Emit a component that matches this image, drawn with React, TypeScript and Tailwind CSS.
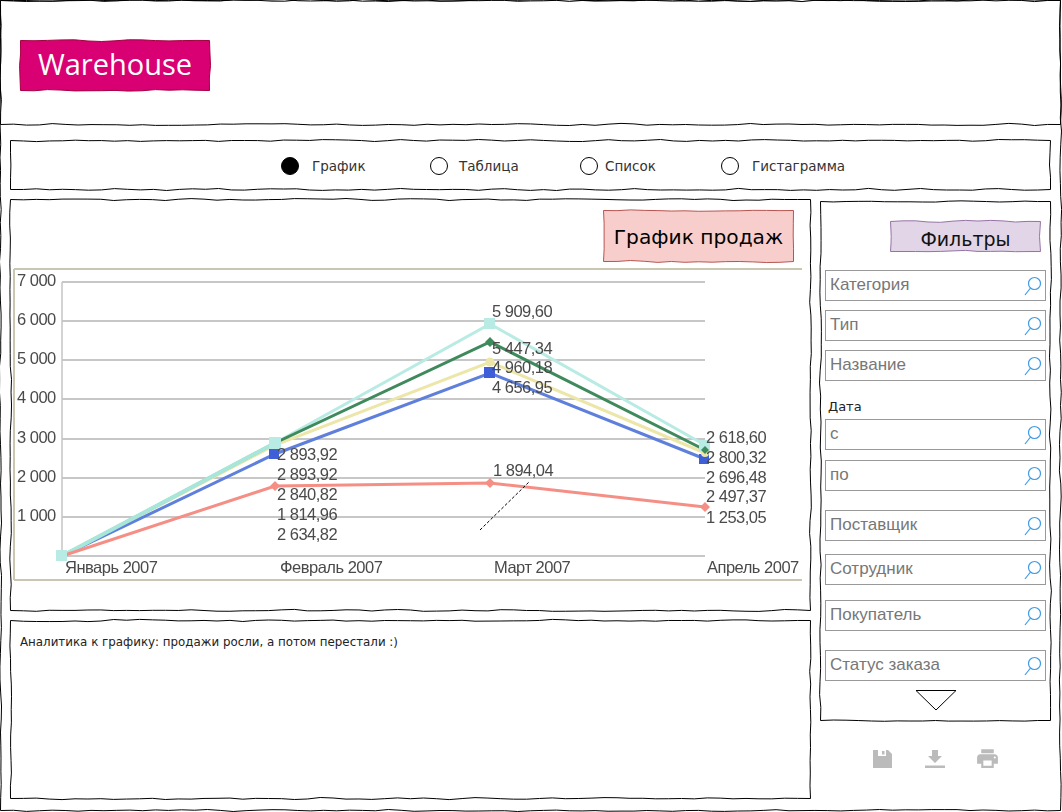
import type { ReactNode } from 'react'
import { MdPrint } from 'react-icons/md'

// wobbly hand-drawn outline, same seed always gives the same line
const wobblyRect = (w: number, h: number, seed: number, amp = 1.1, step = 26) => {
  let s = seed
  const rnd = () => {
    s = (s * 9301 + 49297) % 233280
    return s / 233280 - 0.5
  }
  const edge = (x0: number, y0: number, x1: number, y1: number) => {
    const len = Math.hypot(x1 - x0, y1 - y0)
    const n = Math.max(2, Math.round(len / step))
    const nx = (y1 - y0) / len
    const ny = (x0 - x1) / len
    let d = ''
    for (let i = 1; i <= n; i++) {
      const t = i / n
      const m = (i - 0.5) / n
      const o = i === n ? 0 : rnd() * amp * 2
      const c = rnd() * amp * 2
      d += ` Q${(x0 + (x1 - x0) * m + nx * c).toFixed(1)} ${(y0 + (y1 - y0) * m + ny * c).toFixed(1)} ${(x0 + (x1 - x0) * t + nx * o).toFixed(1)} ${(y0 + (y1 - y0) * t + ny * o).toFixed(1)}`
    }
    return d
  }
  return `M0.5 0.5${edge(0.5, 0.5, w - 0.5, 0.5)}${edge(w - 0.5, 0.5, w - 0.5, h - 0.5)}${edge(w - 0.5, h - 0.5, 0.5, h - 0.5)}${edge(0.5, h - 0.5, 0.5, 0.5)}Z`
}

type SketchProps = {
  w: number
  h: number
  seed: number
  className: string
  fillClass?: string
  strokeClass?: string
  children?: ReactNode
}

function Sketch({ w, h, seed, className, fillClass = 'fill-none', strokeClass = 'stroke-black', children }: SketchProps) {
  return (
    <div className={`relative ${className}`}>
      <svg viewBox={`0 0 ${w} ${h}`} className="absolute inset-0 w-full h-full overflow-visible pointer-events-none">
        <path d={wobblyRect(w, h, seed)} className={`${fillClass} ${strokeClass}`} strokeWidth={1} />
      </svg>
      {children}
    </div>
  )
}

const views = [
  { label: 'График', on: true, width: 'w-[149px]', gap: 'ml-[13px]' },
  { label: 'Таблица', on: false, width: 'w-[150px]', gap: 'ml-[11px]' },
  { label: 'Список', on: false, width: 'w-[141px]', gap: 'ml-[7px]' },
  { label: 'Гистаграмма', on: false, width: 'w-[140px]', gap: 'ml-[13px]' },
]

const filters = [
  { label: 'Категория', top: 'mt-[18px]' },
  { label: 'Тип', top: 'mt-[9px]' },
  { label: 'Название', top: 'mt-[9px]' },
  { label: 'с', top: 'mt-[4px]' },
  { label: 'по', top: 'mt-[10px]' },
  { label: 'Поставщик', top: 'mt-[19px]' },
  { label: 'Сотрудник', top: 'mt-[13px]' },
  { label: 'Покупатель', top: 'mt-[15px]' },
  { label: 'Статус заказа', top: 'mt-[19px]' },
]

function SearchIcon() {
  return (
    <svg width="18" height="20" viewBox="0 0 18 20" className="fill-none stroke-[#3f9be6]" strokeWidth={1.2}>
      <circle cx="10.5" cy="7.5" r="6" />
      <path d="M6.5 12 L1 19" />
    </svg>
  )
}

function FilterField({ label, top }: { label: string; top: string }) {
  return (
    <div className={`${top} ml-[5px] w-[221px] h-[31px] border border-[#999] flex items-center justify-between pl-1 pr-[3px]`}>
      <span className="mb-[2px] text-[17px] text-[#777] font-['Liberation_Sans',sans-serif]">{label}</span>
      <SearchIcon />
    </div>
  )
}

const gridYs = [282, 321, 360, 399, 439, 478, 517, 556]
const axisLabels = ['7 000', '6 000', '5 000', '4 000', '3 000', '2 000', '1 000']

const series = [
  { color: '#b8ebe3', width: 3, pts: '62,556 275,443 490,324 705,445' },
  { color: '#ece6a8', width: 3, pts: '62,556 275,445 490,362 705,453' },
  { color: '#3f8a5c', width: 3, pts: '62,556 275,443 490,342 705,450' },
  { color: '#5f7fdc', width: 3, pts: '62,556 275,454 490,373 705,459' },
  { color: '#a9e6da', width: 4, pts: '62,556 275,443' },
  { color: '#f58f85', width: 3, pts: '62,556 275,486 490,483 705,507' },
]

const valueLabels = [
  { x: 492, y: 317, t: '5 909,60' },
  { x: 492, y: 354, t: '5 447,34' },
  { x: 492, y: 373, t: '4 960,18' },
  { x: 492, y: 393, t: '4 656,95' },
  { x: 493, y: 476, t: '1 894,04' },
  { x: 277, y: 460, t: '2 893,92' },
  { x: 277, y: 480, t: '2 893,92' },
  { x: 277, y: 500, t: '2 840,82' },
  { x: 277, y: 520, t: '1 814,96' },
  { x: 277, y: 540, t: '2 634,82' },
  { x: 706, y: 443, t: '2 618,60' },
  { x: 706, y: 463, t: '2 800,32' },
  { x: 706, y: 483, t: '2 696,48' },
  { x: 706, y: 502, t: '2 497,37' },
  { x: 706, y: 523, t: '1 253,05' },
]

const monthLabels = [
  { x: 65, t: 'Январь 2007' },
  { x: 280, t: 'Февраль 2007' },
  { x: 494, t: 'Март 2007' },
  { x: 707, t: 'Апрель 2007' },
]

function SalesChart() {
  return (
    <svg viewBox="13 268 790 314" className="block w-[790px] h-[314px] mt-[6px] ml-[3px] blur-[0.5px] font-['Liberation_Sans',sans-serif]">
      <rect x="13" y="268" width="790" height="314" fill="#ffffff" />
      <path d="M14 269 H802 M14 269 V580 M14 580 H802" fill="none" stroke="#c9c6b2" strokeWidth={2} />
      {gridYs.map((y) => (
        <line key={y} x1="62" x2="705" y1={y} y2={y} stroke="#b4b4b4" strokeWidth={1.5} />
      ))}
      <line x1="62" x2="62" y1="282" y2="556" stroke="#c4c4c4" strokeWidth={1.5} />
      {series.map((s) => (
        <polyline key={s.pts} points={s.pts} fill="none" stroke={s.color} strokeWidth={s.width} />
      ))}

      {/* markers */}
      <rect x="56" y="550" width="11" height="11" fill="#b8ebe3" />
      <rect x="269" y="437" width="12" height="12" fill="#b8ebe3" />
      <rect x="484" y="318" width="11" height="11" fill="#b8ebe3" />
      <rect x="699" y="440" width="11" height="11" fill="#b8ebe3" />
      <rect x="269" y="449" width="10" height="10" fill="#3f5fd8" />
      <rect x="484" y="367" width="11" height="11" fill="#3f5fd8" />
      <rect x="699" y="454" width="10" height="10" fill="#3f5fd8" />
      <circle cx="490" cy="362" r="4.5" fill="#ece6a8" />
      <circle cx="705" cy="453" r="4" fill="#ece6a8" />
      <path d="M490 337 L495 342 L490 347 L485 342Z M705 446 L709 450 L705 454 L701 450Z" fill="#3f8a5c" />
      <path d="M275 481 L280 486 L275 491 L270 486Z M490 478 L495 483 L490 488 L485 483Z M705 502 L710 507 L705 512 L700 507Z" fill="#f58f85" />

      <g fill="#4a4a4a" fontSize="16.5" letterSpacing="-0.5">
        {axisLabels.map((t, i) => (
          <text key={t} x="17" y={gridYs[i] + 4}>{t}</text>
        ))}
        {valueLabels.map((l, i) => (
          <text key={i} x={l.x} y={l.y}>{l.t}</text>
        ))}
        {monthLabels.map((m) => (
          <text key={m.t} x={m.x} y="573">{m.t}</text>
        ))}
      </g>
      <line x1="480" y1="530" x2="530" y2="481" stroke="#000" strokeWidth={1} strokeDasharray="3 2" />
    </svg>
  )
}

export default function App() {
  return (
    <div className="w-[1062px] h-[812px] bg-white overflow-hidden font-['DejaVu_Sans',sans-serif]">
      <Sketch w={1061} h={811} seed={7} className="w-[1061px] h-[811px]">
        {/* Header */}
        <Sketch w={1061} h={125} seed={21} className="w-[1061px] h-[125px] flex items-center pl-5">
          <Sketch
            w={190}
            h={51}
            seed={33}
            fillClass="fill-[#d80073]"
            strokeClass="stroke-[#a50040]"
            className="w-[190px] h-[51px] mt-[5px] pb-[2px] flex items-center justify-center"
          >
            <span className="relative text-[29px] text-white font-['Open_Sans',sans-serif]">Warehouse</span>
          </Sketch>
        </Sketch>

        <div className="pl-[10px] pt-[15px]">
          {/* View switcher */}
          <Sketch w={1041} h={50} seed={45} className="w-[1041px] h-[50px] flex items-center pl-[271px] pt-[2px]">
            {views.map((v) => (
              <div key={v.label} className={`${v.width} flex items-center`}>
                <span className={`w-[18px] h-[18px] shrink-0 rounded-full border border-black ${v.on ? 'bg-black' : 'bg-white'}`} />
                <span className={`${v.gap} text-[13.5px] text-[#333]`}>{v.label}</span>
              </div>
            ))}
          </Sketch>

          <div className="flex gap-[9px] mt-[9px]">
            <div className="w-[801px] flex flex-col gap-[9px]">
              {/* Chart */}
              <Sketch w={801} h={412} seed={58} className="w-[801px] h-[412px]">
                <div className="relative flex justify-end pt-[11px] pr-[17px]">
                  <Sketch
                    w={191}
                    h={52}
                    seed={64}
                    fillClass="fill-[#f8cecc]"
                    strokeClass="stroke-[#b85450]"
                    className="w-[191px] h-[52px] pt-[2px] flex items-center justify-center"
                  >
                    <span className="relative text-[20.2px] text-black">График продаж</span>
                  </Sketch>
                </div>
                <SalesChart />
              </Sketch>

              {/* Analytics */}
              <Sketch w={801} h={179} seed={71} className="w-[801px] h-[179px] pl-[10px] pt-[14px]">
                <p className="text-[11.85px] text-[#222]">Аналитика к графику: продажи росли, а потом перестали :)</p>
              </Sketch>
            </div>

            <div className="w-[231px] mt-[2px]">
              {/* Filters */}
              <Sketch w={231} h={520} seed={83} className="w-[231px] h-[520px] pt-[20px]">
                <div className="flex justify-end pr-[10px]">
                  <Sketch
                    w={151}
                    h={31}
                    seed={90}
                    fillClass="fill-[#e1d5e7]"
                    strokeClass="stroke-[#9673a6]"
                    className="w-[151px] h-[31px] pt-[6px] flex items-center justify-center"
                  >
                    <span className="relative text-[19px] text-[#111]">Фильтры</span>
                  </Sketch>
                </div>
                {filters.slice(0, 3).map((f) => (
                  <FilterField key={f.label} label={f.label} top={f.top} />
                ))}
                <p className="mt-[18px] ml-[8px] text-[13px] leading-[16px] text-[#222]">Дата</p>
                {filters.slice(3).map((f) => (
                  <FilterField key={f.label} label={f.label} top={f.top} />
                ))}
                <svg width="42" height="21" viewBox="0 0 42 21" className="mt-[9px] ml-[95px] fill-white stroke-black">
                  <path d="M1 0.5 H41 L21 20Z" />
                </svg>
              </Sketch>

              {/* Toolbar */}
              <div className="flex items-center mt-[25px] ml-[53px] text-[#bbb] blur-[0.5px]">
                <svg width="19" height="18" viewBox="0 0 19 18" className="fill-current">
                  <path fillRule="evenodd" d="M0 0 H15 L19 4 V18 H0Z M5 0 V6 H13 V0Z" />
                  <rect x="9" y="1" width="2.5" height="3.5" />
                </svg>
                <svg width="20" height="18" viewBox="0 0 20 18" className="fill-current ml-[33px]">
                  <path d="M7 0 H13 V6 H17 L10 13 L3 6 H7Z M0 15.5 H20 V18 H0Z" />
                </svg>
                <MdPrint className="w-[25px] h-[25px] ml-[30px]" />
              </div>
            </div>
          </div>
        </div>
      </Sketch>
    </div>
  )
}
